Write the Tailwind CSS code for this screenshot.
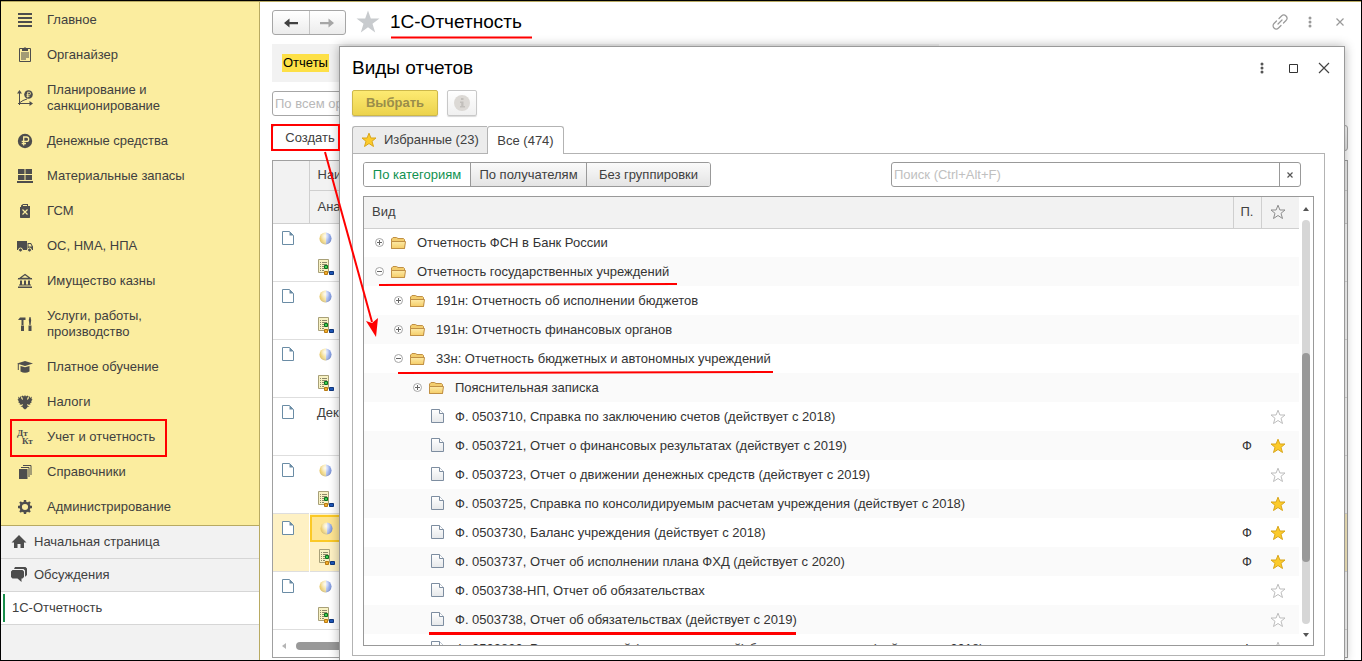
<!DOCTYPE html>
<html lang="ru">
<head>
<meta charset="utf-8">
<meta name="viewport" content="width=device-width, initial-scale=1">
<title>1С-Отчетность</title>
<script src="https://cdn.jsdelivr.net/npm/@tailwindcss/browser@4"></script>
</head>
<body class="h-screen overflow-hidden bg-white font-['Liberation_Sans',Arial,sans-serif] text-[13px] leading-4 text-[#404040]">

<svg class="absolute size-0" aria-hidden="true">
  <defs>
    <linearGradient id="gFolder" x1="0" y1="0" x2="0" y2="1"><stop offset="0" stop-color="#fdeaa6"/><stop offset="1" stop-color="#f5cd68"/></linearGradient>
    <linearGradient id="gFile" x1="0" y1="0" x2="0" y2="1"><stop offset="0" stop-color="#fff"/><stop offset="1" stop-color="#e6e8ea"/></linearGradient>
    <linearGradient id="gBall" x1="0" y1="0" x2="1" y2="0"><stop offset="0" stop-color="#e9c558"/><stop offset=".5" stop-color="#f8e6a4"/><stop offset=".52" stop-color="#b9c9f4"/><stop offset="1" stop-color="#6e8ce0"/></linearGradient>
    <radialGradient id="gShine" cx=".45" cy=".3" r=".7"><stop offset="0" stop-color="#fff" stop-opacity=".85"/><stop offset=".6" stop-color="#fff" stop-opacity=".1"/><stop offset="1" stop-color="#555" stop-opacity=".25"/></radialGradient>
    <symbol id="folder" viewBox="0 0 15 14"><path d="M.5 4V12.500H13.500V3.500L12.500 2.500H7L5.500 1.500H2L.5 3Z" fill="#f3cd6e" stroke="#c09045"/><path d="M.5 5.500H14.500L13.500 12.500H.5Z" fill="url(#gFolder)" stroke="#c09045"/></symbol>
    <symbol id="file" viewBox="0 0 13 15"><path d="M.5.5H8.500L12.500 4.500V13.500H.5Z" fill="url(#gFile)" stroke="#7d8da0"/><path d="M8.500.5V4.500H12.500" fill="#fff" stroke="#7d8da0"/></symbol>
    <symbol id="page" viewBox="0 0 13 15"><path d="M1.500.5H8.500L12.500 4.500V13.500H1.500Z" fill="#fff" stroke="#6a8ca5"/><path d="M8.500.5L12.500 4.500H8.500Z" fill="#6a8ca5"/></symbol>
    <symbol id="plus" viewBox="0 0 11 11"><circle cx="5.500" cy="5.500" r="4" fill="#fff" stroke="#a6a6a6"/><path d="M3 5.500H8M5.500 3V8" stroke="#666"/></symbol>
    <symbol id="minus" viewBox="0 0 11 11"><circle cx="5.500" cy="5.500" r="4" fill="#fff" stroke="#a6a6a6"/><path d="M3 5.500H8" stroke="#666"/></symbol>
    <symbol id="starOn" viewBox="0 0 16 16"><path d="M8 1.200L9.900 6H15L11 9.300L12.500 14.500L8 11.500L3.500 14.500L5 9.300L1 6H6.100Z" fill="#fccb2b" stroke="#d9a61b"/></symbol>
    <symbol id="starOff" viewBox="0 0 16 16"><path d="M8 1.200L9.900 6H15L11 9.300L12.500 14.500L8 11.500L3.500 14.500L5 9.300L1 6H6.100Z" fill="#fff" stroke="#bdbdbd"/></symbol>
    <symbol id="ball" viewBox="0 0 13 13"><circle cx="6.500" cy="6.500" r="6" fill="url(#gBall)"/><circle cx="6.500" cy="6.500" r="6" fill="url(#gShine)"/></symbol>
    <symbol id="list" viewBox="0 0 16 16"><path d="M.5.5H10.500V13.500H.5Z" fill="#f8f2c4" stroke="#a8a078"/><path d="M2 3.500H3M2 5.500H3M2 7.500H3M2 9.500H3M2 11.500H3M4 3.500H9M4 5.500H9M4 7.500H6M4 9.500H6M4 11.500H6" stroke="#8c8868"/><path d="M6.500 6.500H9.500V9.500H6.500Z" fill="#3fd04f" stroke="#0c6e22"/><path d="M6.500 12.500H9.500V15.500H6.500Z" fill="#f2ae2e" stroke="#b87a10"/><path d="M11.500 12.500H15.500V15.500H11.500Z" fill="#1d56b8" stroke="#0f377e"/></symbol>
  </defs>
</svg>

<div class="relative flex h-full border border-black">

  <aside class="flex w-[259px] shrink-0 flex-col border-r border-t border-[#b8aa62] bg-[#f2f2f2]">
    <nav aria-label="Разделы" class="bg-[#fbed9f] pb-px">
      <ul class="fill-[#4d4d4d]">
        <li><a href="#" class="flex min-h-[35px] items-center gap-[14px] pl-4"><svg class="size-4" viewBox="0 0 16 16"><path d="M1 1h14v2H1zM1 5h14v2H1zM1 9h14v2H1zM1 13h14v2H1z"/></svg>Главное</a></li>
        <li><a href="#" class="flex min-h-[35px] items-center gap-[14px] pl-4"><svg class="size-4" viewBox="0 0 16 16"><path d="M2.500 1.500h11v13h-11z" fill="none" stroke="#4d4d4d"/><path d="M5 4V2h1.500L7 .5h2l.5 1.500H11v2zM4 5.500h8v1H4zM4 7.500h8v1H4zM4 9.500h8v1H4zM4 11.500h5v1H4z"/></svg>Органайзер</a></li>
        <li><a href="#" class="flex min-h-[51px] items-center gap-[14px] pl-4"><svg class="size-4" viewBox="0 0 16 16"><path d="M2.500 15V2M1 13.500h13M3 12.500L6 10.500L10 9" fill="none" stroke="#4d4d4d"/><path d="M2.500 0L5 3.500H0zM16 13.500L12.500 16V11z"/><circle cx="11.500" cy="4.500" r="4.300"/><path d="M10.700 7.500V2.200h1.500a1.300 1.300 0 0 1 0 2.600H9.500M9.500 6.300h3" fill="none" stroke="#fbed9f" stroke-width=".9"/></svg><span>Планирование и<br>санкционирование</span></a></li>
        <li><a href="#" class="flex min-h-[35px] items-center gap-[14px] pl-4"><svg class="size-4" viewBox="0 0 16 16"><circle cx="8" cy="8" r="7.200"/><path d="M6.700 12.500V4H9.500a2.200 2.200 0 0 1 0 4.400H4.700M4.700 10.500H9" fill="none" stroke="#fbed9f" stroke-width="1.300"/></svg>Денежные средства</a></li>
        <li><a href="#" class="flex min-h-[35px] items-center gap-[14px] pl-4"><svg class="size-4" viewBox="0 0 16 16"><path d="M1 1h6.500v5H1zM8.500 1H15v5H8.500zM1 7h6.500v5H1zM8.500 7H15v5H8.500zM0 13h16v2H0z"/></svg>Материальные запасы</a></li>
        <li><a href="#" class="flex min-h-[35px] items-center gap-[14px] pl-4"><svg class="size-4" viewBox="0 0 16 16"><path d="M4 4V2.500L6 1h5v2h2v11.500l-.5.5h-9L3 14.500V4z"/><path d="M5.500 6.500l5 5M10.500 6.500l-5 5" stroke="#fbed9f" stroke-width="1.200"/><path d="M6 2.500h4" stroke="#fbed9f"/></svg>ГСМ</a></li>
        <li><a href="#" class="flex min-h-[35px] items-center gap-[14px] pl-4"><svg class="size-4" viewBox="0 0 16 16"><path d="M0 3h10v9H0zM10.500 5H14l2 3.500V12h-5.500z"/><path d="M11.500 6h2l1.300 2.500h-3.300z" fill="#fbed9f"/><circle cx="3.500" cy="12" r="2" stroke="#fbed9f"/><circle cx="12.500" cy="12" r="2" stroke="#fbed9f"/></svg>ОС, НМА, НПА</a></li>
        <li><a href="#" class="flex min-h-[35px] items-center gap-[14px] pl-4"><svg class="size-4" viewBox="0 0 16 16"><path d="M8 1.500L13.500 5.500H2.500Z" fill="none" stroke="#4d4d4d" stroke-width="1.300"/><path d="M1 5h14v1.200H1zM3 7.500h2v4.500H3zM7 7.500h2v4.500H7zM11 7.500h2v4.500h-2zM2 11.500h12v1H2zM1 13.500h14V15H1z"/></svg>Имущество казны</a></li>
        <li><a href="#" class="flex min-h-[51px] items-center gap-[14px] pl-4"><svg class="size-4" viewBox="0 0 16 16"><path d="M1 4L3 1.500h5.500V4H6.500V9h-2V4zM4 9.500h3V15H4zM12.500 1h1l.7 3-.6 5h-1.200l-.6-5zM11.500 9.500h3V15h-3z"/></svg><span>Услуги, работы,<br>производство</span></a></li>
        <li><a href="#" class="flex min-h-[35px] items-center gap-[14px] pl-4"><svg class="size-4" viewBox="0 0 16 16"><path d="M0 4.500L8 2l8 2.500L8 7zM3.500 7L8 8.300L12.500 7v5.500q-4.500 2.500-9 0zM.8 5h1v6h-1z"/></svg>Платное обучение</a></li>
        <li><a href="#" class="flex min-h-[35px] items-center gap-[14px] pl-4"><svg class="size-4" viewBox="0 0 16 16"><path d="M8 1l1 1.500L10.500 1.500 12 3l-1.500.5L10 6l1.500-1L12.500 2 13.500 4 15 2.500 14.500 5 15.500 5.500 14 7.500 15 8l-2 1.500.5 1-2 .2-1-.7-.5 1 2.500 2-2-.2-.5 1.200L8 15.500l-2-1.500-.5-1.200-2 .2 2.500-2-.5-1-1 .7-2-.2.5-1L1 8l1-.5L.5 5.500 1.500 5 1 2.500 2.500 4l1-2 1 3L6 6 5.500 3.500 4 3l1.500-1.500L7 2.500z"/></svg>Налоги</a></li>
        <li><a href="#" class="flex min-h-[35px] items-center gap-[14px] pl-4" aria-current="true"><svg class="size-4 overflow-visible font-['Liberation_Serif',serif] text-[9px] font-bold" viewBox="0 0 16 16"><text x="0" y="7">Дт</text><text x="5" y="15">Кт</text></svg>Учет и отчетность</a></li>
        <li><a href="#" class="flex min-h-[35px] items-center gap-[14px] pl-4"><svg class="size-4" viewBox="0 0 16 16"><path d="M2 5h8.500v10H2z"/><path d="M4 3.500h8V13M6 1.500h8V11" fill="none" stroke="#4d4d4d"/></svg>Справочники</a></li>
        <li><a href="#" class="flex min-h-[35px] items-center gap-[14px] pl-4"><svg class="size-4" viewBox="0 0 16 16"><circle cx="8" cy="8" r="4.300" fill="none" stroke="#4d4d4d" stroke-width="2.400"/><path d="M8 1v3M8 12v3M1 8h3M12 8h3M3 3l2 2M11 11l2 2M13 3l-2 2M5 11l-2 2" stroke="#4d4d4d" stroke-width="2.400"/></svg>Администрирование</a></li>
      </ul>
    </nav>
    <nav aria-label="Открытые окна" class="border-t border-[#b8aa62] fill-[#4d4d4d]">
      <a href="#" class="flex h-[33px] items-center gap-[7px] border-b border-[#d6d6d6] pl-[10px]"><svg class="size-4" viewBox="0 0 16 16"><path d="M8 1L15.500 8.500H13V14H9.500V10H6.500V14H3V8.500H.5Z"/></svg>Начальная страница</a>
      <a href="#" class="flex h-[33px] items-center gap-[7px] border-b border-[#d6d6d6] pl-[10px]"><svg class="size-4" viewBox="0 0 16 16"><path d="M4 0h10.500L16 1.500V8l-1.500 1.500H14V3.500L12.500 2H3z"/><path d="M1.500 3h10L13 4.500V10l-1.500 1.500H10.500V15L6.500 11.500h-5L0 10V4.500z"/></svg>Обсуждения</a>
      <a href="#" class="flex h-[33px] items-center border-b border-[#d6d6d6] bg-white pl-[2px]" aria-current="page"><span class="h-7 w-[2px] bg-[#1a8f4c]"></span><span class="pl-[7px]">1С-Отчетность</span></a>
    </nav>
  </aside>

  <main class="flex min-w-0 flex-1 flex-col border-t border-[#b8aa62] bg-white pb-[2px] pl-3 pr-[13px] pt-2">
    <header class="flex h-[25px] items-start">
      <div class="flex h-[25px] w-[74px] overflow-hidden rounded-[3px] border border-[#a6a6a6] bg-linear-to-b from-white to-[#ececec]">
        <button type="button" aria-label="Назад" class="flex flex-1 items-center justify-center border-r border-[#c4c4c4]"><svg class="h-3 w-4" viewBox="0 0 16 12"><path d="M1 6L6.500 1.500V5H15V7.200H6.500V10.500Z" fill="#404040"/></svg></button>
        <button type="button" aria-label="Вперед" class="flex flex-1 items-center justify-center"><svg class="h-3 w-4" viewBox="0 0 16 12"><path d="M15 6L9.500 1.500V5H1V7.200H9.500V10.500Z" fill="#a6a6a6"/></svg></button>
      </div>
      <button type="button" aria-label="В избранное" class="ml-[10px]"><svg class="size-6" viewBox="0 0 24 24"><path d="M12 .5L14.800 8.500H23.500L16.500 13.700L19.200 22.500L12 17.200L4.800 22.500L7.500 13.700L.5 8.500H9.200Z" fill="#c8cbce"/></svg></button>
      <h1 class="ml-[10px] text-[19px] leading-6 text-black">1С-Отчетность</h1>
      <div class="ml-auto flex h-6 items-center">
        <button type="button" aria-label="Ссылка"><svg class="size-4" viewBox="0 0 16 16" fill="none" stroke="#999" stroke-width="1.200" stroke-linecap="round"><path d="M7 4.500L9.500 2a3.100 3.100 0 0 1 4.500 4.500L11.500 9M9 11.500L6.500 14A3.100 3.100 0 0 1 2 9.500L4.500 7M6 10L10 6"/></svg></button>
        <button type="button" aria-label="Меню" class="ml-[14px]"><svg class="size-4" viewBox="0 0 16 16" fill="#999"><circle cx="8" cy="4" r="1.500"/><circle cx="8" cy="8" r="1.500"/><circle cx="8" cy="12" r="1.500"/></svg></button>
        <button type="button" aria-label="Закрыть" class="ml-[14px]"><svg class="size-4" viewBox="0 0 16 16" stroke="#999" stroke-width="1.200"><path d="M4.500 4.500L11.500 11.500M11.500 4.500L4.500 11.500"/></svg></button>
      </div>
    </header>
    <div class="mt-[9px] flex h-[38px] w-[62%] items-center bg-[#f2f2f2] pl-[10px]"><a href="#" class="bg-[#fde047] px-px py-px text-black">Отчеты</a></div>
    <input type="text" aria-label="Организация" placeholder="По всем организациям" class="mt-[9px] h-[25px] w-[240px] rounded-[3px] border border-[#a6a6a6] px-[2px] placeholder:text-[#b8b8b8]">
    <div class="mt-[9px] flex h-[26px] justify-between">
      <button type="button" class="w-[76px] rounded-[3px] border border-[#a6a6a6] bg-white">Создать</button>
      <button type="button" aria-label="Еще" class="w-16 rounded-[3px] border border-[#a6a6a6] bg-linear-to-b from-white to-[#e6e6e6]"></button>
    </div>
    <div class="mt-[9px] flex min-h-0 flex-1 flex-col border border-[#a0a0a0]">
      <table class="w-full table-fixed border-collapse">
        <colgroup><col class="w-9"><col></colgroup>
        <thead>
          <tr class="h-[61px] border-b border-[#cfcfcf] bg-[#f2f2f2] text-left align-top">
            <th class="border-r border-[#cfcfcf]" aria-label="Состояние"></th>
            <th class="p-0 font-normal"><div class="h-[30px] border-b border-[#cfcfcf] py-[6px] pl-2">Наименование</div><div class="py-2 pl-2">Аналитика</div></th>
          </tr>
        </thead>
        <tbody>
          <tr class="h-[58px] border-b border-[#dedede] align-top"><td class="pl-2 pt-[7px]"><svg class="h-[15px] w-[13px]"><use href="#page"/></svg></td><td class="pl-[10px] pt-2"><svg class="size-[13px]"><use href="#ball"/></svg><svg class="-ml-px mt-[14px] size-4"><use href="#list"/></svg></td></tr>
          <tr class="h-[58px] border-b border-[#dedede] align-top"><td class="pl-2 pt-[7px]"><svg class="h-[15px] w-[13px]"><use href="#page"/></svg></td><td class="pl-[10px] pt-2"><svg class="size-[13px]"><use href="#ball"/></svg><svg class="-ml-px mt-[14px] size-4"><use href="#list"/></svg></td></tr>
          <tr class="h-[58px] border-b border-[#dedede] align-top"><td class="pl-2 pt-[7px]"><svg class="h-[15px] w-[13px]"><use href="#page"/></svg></td><td class="pl-[10px] pt-2"><svg class="size-[13px]"><use href="#ball"/></svg><svg class="-ml-px mt-[14px] size-4"><use href="#list"/></svg></td></tr>
          <tr class="h-[58px] border-b border-[#dedede] align-top"><td class="pl-2 pt-[7px]"><svg class="h-[15px] w-[13px]"><use href="#page"/></svg></td><td class="pl-2 pt-[7px]">Декларация</td></tr>
          <tr class="h-[58px] border-b border-[#dedede] align-top"><td class="pl-2 pt-[7px]"><svg class="h-[15px] w-[13px]"><use href="#page"/></svg></td><td class="pl-[10px] pt-2"><svg class="size-[13px]"><use href="#ball"/></svg><svg class="-ml-px mt-[14px] size-4"><use href="#list"/></svg></td></tr>
          <tr class="h-[58px] border-b border-[#dedede] bg-[#fef1c4] align-top"><td class="border-r border-white pl-2 pt-[7px]"><svg class="h-[15px] w-[13px]"><use href="#page"/></svg></td><td class="p-0 pt-px"><div class="mr-3 h-[27px] border-2 border-[#fbc926] bg-[#fee592] pl-2 pt-[5px]"><svg class="size-[13px]"><use href="#ball"/></svg></div><svg class="ml-[9px] mt-[7px] size-4"><use href="#list"/></svg></td></tr>
          <tr class="h-[58px] border-b border-[#dedede] align-top"><td class="pl-2 pt-[7px]"><svg class="h-[15px] w-[13px]"><use href="#page"/></svg></td><td class="pl-[10px] pt-2"><svg class="size-[13px]"><use href="#ball"/></svg><svg class="-ml-px mt-[14px] size-4"><use href="#list"/></svg></td></tr>
        </tbody>
      </table>
      <div class="mt-auto flex items-center gap-[10px] pb-[7px] pl-[9px]"><svg class="h-2 w-1" viewBox="0 0 4 8"><path d="M4 1V7L0 4Z" fill="#b5b5b5"/></svg><div class="h-2 w-1/2 rounded-full bg-[#999]"></div></div>
    </div>
  </main>

  <section role="dialog" aria-labelledby="dlgTitle" class="absolute bottom-0 left-[338px] right-4 top-[45px] flex flex-col border border-b-0 border-[#999] bg-white pb-1 pl-3 pr-[19px] shadow-[0_0_10px_rgba(0,0,0,0.3)]">
    <header class="mb-[2px] flex h-[41px] shrink-0 items-center">
      <h2 id="dlgTitle" class="text-[19px] leading-6 text-black">Виды отчетов</h2>
      <div class="-mr-[7px] ml-auto flex items-center gap-[15px]">
        <button type="button" aria-label="Меню диалога"><svg class="size-4" viewBox="0 0 16 16" fill="#555"><circle cx="8" cy="4" r="1.500"/><circle cx="8" cy="8" r="1.500"/><circle cx="8" cy="12" r="1.500"/></svg></button>
        <button type="button" aria-label="Развернуть"><svg class="size-4" viewBox="0 0 16 16"><path d="M4.500 4.500h8v8h-8z" fill="none" stroke="#333"/></svg></button>
        <button type="button" aria-label="Закрыть диалог"><svg class="size-4" viewBox="0 0 16 16"><path d="M3 3L13 13M13 3L3 13" stroke="#444" stroke-width="1.200"/></svg></button>
      </div>
    </header>
    <div class="flex h-[26px] shrink-0 gap-[9px]">
      <button type="button" class="w-[86px] rounded-[2px] border border-[#cdb84a] bg-linear-to-b from-[#fdea72] to-[#ecd34c] font-bold text-[#9a8d4a] shadow-[0_1px_1px_rgba(0,0,0,0.25)]">Выбрать</button>
      <button type="button" aria-label="Информация" class="flex w-[30px] items-center justify-center rounded-[2px] border border-[#c8c8c8] bg-linear-to-b from-white to-[#f0f0f0] shadow-[0_1px_1px_rgba(0,0,0,0.15)]"><svg class="size-4" viewBox="0 0 16 16"><circle cx="8" cy="8" r="8" fill="#dcd9d5"/><path d="M7 3h2.500v2H7zM6 6.500h3.500V11H11v1.500H6V11h1.200V8H6z" fill="#c2bfbb"/></svg></button>
    </div>
    <div role="tablist" class="z-10 mt-[10px] -mb-px flex h-7 shrink-0">
      <button type="button" role="tab" aria-selected="false" class="flex w-[135px] items-center gap-[7px] rounded-tl-[3px] border border-r-0 border-[#b3b3b3] bg-[#ececec] pl-2"><svg class="size-4"><use href="#starOn"/></svg>Избранные (23)</button>
      <button type="button" role="tab" aria-selected="true" class="w-[77px] rounded-t-[3px] border border-b-0 border-[#b3b3b3] bg-white">Все (474)</button>
    </div>
    <div class="flex min-h-0 flex-1 flex-col border border-[#b3b3b3] px-[10px] pb-[9px] pt-2">
      <div class="flex h-[25px] shrink-0 items-stretch pr-[13px]">
        <div role="group" aria-label="Группировка" class="flex overflow-hidden rounded-[3px] border border-[#999]">
          <button type="button" aria-pressed="true" class="w-[106px] bg-white text-[#0f9150]">По категориям</button>
          <button type="button" class="w-[117px] border-x border-[#999] bg-linear-to-b from-[#fafafa] to-[#e4e4e4]">По получателям</button>
          <button type="button" class="w-[123px] bg-linear-to-b from-[#fafafa] to-[#e4e4e4]">Без группировки</button>
        </div>
        <div class="ml-auto flex w-[410px] overflow-hidden rounded-[3px] border border-[#999]">
          <input type="text" aria-label="Поиск" placeholder="Поиск (Ctrl+Alt+F)" class="min-w-0 flex-1 px-[2px] placeholder:text-[#c0c0c0]">
          <button type="button" aria-label="Очистить" class="flex w-[21px] items-center justify-center border-l border-[#999]"><svg class="size-2" viewBox="0 0 8 8"><path d="M1.500 1.500L6.500 6.500M6.500 1.500L1.500 6.500" stroke="#555" stroke-width="1.200"/></svg></button>
        </div>
      </div>
      <div class="mt-[9px] flex min-h-0 flex-1 overflow-hidden border border-[#999]">
        <div class="min-w-0 flex-1 overflow-hidden">
        <table class="w-full table-fixed border-collapse">
          <colgroup><col><col class="w-7"><col class="w-[38px]"></colgroup>
          <thead>
            <tr class="h-[31px] border-b border-[#cfcfcf] bg-[#f2f2f2] text-left">
              <th class="border-r border-[#cfcfcf] pl-2 font-normal">Вид</th>
              <th class="border-r border-[#cfcfcf] p-0 text-center font-normal">П.</th>
              <th class="p-0 pr-1" aria-label="Избранное"><svg class="mx-auto size-4" viewBox="0 0 16 16"><path d="M8 1.200L9.900 6H15L11 9.300L12.500 14.500L8 11.500L3.500 14.500L5 9.300L1 6H6.100Z" fill="none" stroke="#8c8c8c"/></svg></th>
            </tr>
          </thead>
          <tbody class="whitespace-nowrap text-[#333]">
            <tr class="h-[29px]"><td class="p-0"><div class="flex items-center pl-[10px]"><svg class="mr-[6px] size-[11px]"><use href="#plus"/></svg><svg class="mr-[11px] h-[14px] w-[15px]"><use href="#folder"/></svg>Отчетность ФСН в Банк России</div></td><td></td><td></td></tr>
            <tr class="h-[29px] bg-[#fafafa]"><td class="p-0"><div class="flex items-center pl-[10px]"><svg class="mr-[6px] size-[11px]"><use href="#minus"/></svg><svg class="mr-[11px] h-[14px] w-[15px]"><use href="#folder"/></svg>Отчетность государственных учреждений</div></td><td></td><td></td></tr>
            <tr class="h-[29px]"><td class="p-0"><div class="flex items-center pl-[29px]"><svg class="mr-[6px] size-[11px]"><use href="#plus"/></svg><svg class="mr-[11px] h-[14px] w-[15px]"><use href="#folder"/></svg>191н: Отчетность об исполнении бюджетов</div></td><td></td><td></td></tr>
            <tr class="h-[29px] bg-[#fafafa]"><td class="p-0"><div class="flex items-center pl-[29px]"><svg class="mr-[6px] size-[11px]"><use href="#plus"/></svg><svg class="mr-[11px] h-[14px] w-[15px]"><use href="#folder"/></svg>191н: Отчетность финансовых органов</div></td><td></td><td></td></tr>
            <tr class="h-[29px]"><td class="p-0"><div class="flex items-center pl-[29px]"><svg class="mr-[6px] size-[11px]"><use href="#minus"/></svg><svg class="mr-[11px] h-[14px] w-[15px]"><use href="#folder"/></svg>33н: Отчетность бюджетных и автономных учреждений</div></td><td></td><td></td></tr>
            <tr class="h-[29px] bg-[#fafafa]"><td class="p-0"><div class="flex items-center pl-12"><svg class="mr-[6px] size-[11px]"><use href="#plus"/></svg><svg class="mr-[11px] h-[14px] w-[15px]"><use href="#folder"/></svg>Пояснительная записка</div></td><td></td><td></td></tr>
            <tr class="h-[29px]"><td class="p-0"><div class="flex items-center pl-[67px]"><svg class="mr-[11px] h-[15px] w-[13px]"><use href="#file"/></svg>Ф. 0503710, Справка по заключению счетов (действует с 2018)</div></td><td></td><td class="p-0 pr-1"><svg class="mx-auto size-4"><use href="#starOff"/></svg></td></tr>
            <tr class="h-[29px] bg-[#fafafa]"><td class="p-0"><div class="flex items-center pl-[67px]"><svg class="mr-[11px] h-[15px] w-[13px]"><use href="#file"/></svg>Ф. 0503721, Отчет о финансовых результатах (действует с 2019)</div></td><td class="p-0 text-center">Ф</td><td class="p-0 pr-1"><svg class="mx-auto size-4"><use href="#starOn"/></svg></td></tr>
            <tr class="h-[29px]"><td class="p-0"><div class="flex items-center pl-[67px]"><svg class="mr-[11px] h-[15px] w-[13px]"><use href="#file"/></svg>Ф. 0503723, Отчет о движении денежных средств (действует с 2019)</div></td><td></td><td class="p-0 pr-1"><svg class="mx-auto size-4"><use href="#starOff"/></svg></td></tr>
            <tr class="h-[29px] bg-[#fafafa]"><td class="p-0"><div class="flex items-center pl-[67px]"><svg class="mr-[11px] h-[15px] w-[13px]"><use href="#file"/></svg>Ф. 0503725, Справка по консолидируемым расчетам учреждения (действует с 2018)</div></td><td></td><td class="p-0 pr-1"><svg class="mx-auto size-4"><use href="#starOn"/></svg></td></tr>
            <tr class="h-[29px]"><td class="p-0"><div class="flex items-center pl-[67px]"><svg class="mr-[11px] h-[15px] w-[13px]"><use href="#file"/></svg>Ф. 0503730, Баланс учреждения (действует с 2018)</div></td><td class="p-0 text-center">Ф</td><td class="p-0 pr-1"><svg class="mx-auto size-4"><use href="#starOn"/></svg></td></tr>
            <tr class="h-[29px] bg-[#fafafa]"><td class="p-0"><div class="flex items-center pl-[67px]"><svg class="mr-[11px] h-[15px] w-[13px]"><use href="#file"/></svg>Ф. 0503737, Отчет об исполнении плана ФХД (действует с 2020)</div></td><td class="p-0 text-center">Ф</td><td class="p-0 pr-1"><svg class="mx-auto size-4"><use href="#starOn"/></svg></td></tr>
            <tr class="h-[29px]"><td class="p-0"><div class="flex items-center pl-[67px]"><svg class="mr-[11px] h-[15px] w-[13px]"><use href="#file"/></svg>Ф. 0503738-НП, Отчет об обязательствах</div></td><td></td><td class="p-0 pr-1"><svg class="mx-auto size-4"><use href="#starOff"/></svg></td></tr>
            <tr class="h-[29px] bg-[#fafafa]"><td class="p-0"><div class="flex items-center pl-[67px]"><svg class="mr-[11px] h-[15px] w-[13px]"><use href="#file"/></svg>Ф. 0503738, Отчет об обязательствах (действует с 2019)</div></td><td></td><td class="p-0 pr-1"><svg class="mx-auto size-4"><use href="#starOff"/></svg></td></tr>
            <tr class="h-[29px]"><td class="p-0"><div class="flex items-center pl-[67px]"><svg class="mr-[11px] h-[15px] w-[13px]"><use href="#file"/></svg>Ф. 0503830, Разделительный (ликвидационный) баланс учреждения (действует с 2018)</div></td><td class="p-0 text-center">Ф</td><td class="p-0 pr-1"><svg class="mx-auto size-4"><use href="#starOff"/></svg></td></tr>
          </tbody>
        </table>
        </div>
        <div class="flex w-[14px] shrink-0 flex-col items-center gap-[9px] pb-2 pt-[10px]">
          <svg class="h-1 w-[6px] shrink-0" viewBox="0 0 6 4"><path d="M0 4L3 0L6 4Z" fill="#555"/></svg>
          <div class="flex w-2 flex-1 flex-col rounded-full bg-[#d6d6d6] pt-[133px]"><div class="h-[77%] rounded-full bg-[#999]"></div></div>
          <svg class="h-1 w-[6px] shrink-0" viewBox="0 0 6 4"><path d="M0 0L3 4L6 0Z" fill="#555"/></svg>
        </div>
      </div>
    </div>
  </section>

  <svg class="pointer-events-none absolute -left-px -top-px z-20 h-[661px] w-[1362px]" viewBox="0 0 1362 661" fill="none" stroke="#f00" stroke-width="2" aria-hidden="true">
    <path d="M11 420H166V456H11ZM272 125H339V150H272Z"/>
    <path d="M391 37.500H532M379 285L677 284M398 373L773 372"/>
    <path d="M429 633.500H796" stroke-width="3"/>
    <path d="M325 152L372 322"/>
    <path d="M376 337L366 321L372 323L378 318Z" fill="#f00" stroke="none"/>
  </svg>
</div>
</body>
</html>
